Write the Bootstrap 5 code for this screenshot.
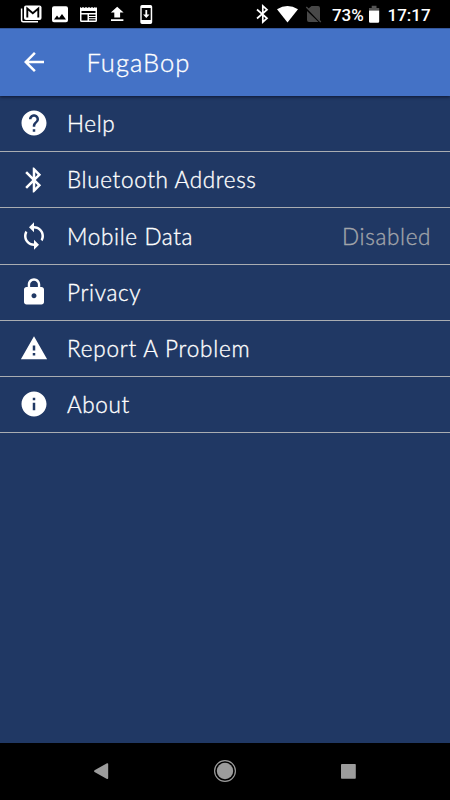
<!DOCTYPE html>
<html lang="en">
<head>
<meta charset="utf-8">
<meta name="viewport" content="width=device-width, initial-scale=1">
<title>FugaBop</title>
<link href="https://cdn.jsdelivr.net/npm/bootstrap@5.3.0/dist/css/bootstrap.min.css" rel="stylesheet">
<style>
body{background:#203864;font-family:Lato,"Noto Sans",sans-serif;height:800px;overflow:hidden;color:#fff}
svg{display:block;fill:currentColor;flex:none}
.status-bar{height:28px;background:#000;font:500 17px/28px Roboto,sans-serif;padding:0 19.500px 0 15px}
.charge{margin:2px 4px 0 7px;letter-spacing:-.1px}
.clock{margin:2px 0 0 8px;letter-spacing:-.05px}
.app-bar{height:68px;background:#4472c6;border-top:1px solid #35589c;box-shadow:0 1px 3px rgba(0,0,20,.6);padding:0 0 2px 18.500px}
.app-title{font-size:25.500px;line-height:30px;font-weight:300;margin:1px 0 0 38px;letter-spacing:1px;-webkit-text-stroke:.35px currentColor}
.settings .list-group-item{height:56px;background:transparent;color:#fff;border:0;border-bottom:1px solid #a9adb2;padding:0 18.500px;font-size:22.500px;font-weight:300;line-height:28px;letter-spacing:.65px}
.settings .list-group-item.tall{height:57px}
.settings .list-group-item.wide{letter-spacing:.8px}
.settings svg{margin:-1px 18.500px 0 0}
.settings svg.low{margin-top:0}
.settings span{padding-top:1px;-webkit-text-stroke:.35px currentColor}
.value{color:#a2a5aa;margin-right:.4px}
.nav-keys{height:57px;background:#000;color:#9c9c9c}
</style>
<script src="https://cdn.jsdelivr.net/npm/bootstrap@5.3.0/dist/js/bootstrap.bundle.min.js"></script>
</head>
<body class="d-flex flex-column m-0">
<div class="status-bar d-flex align-items-center">
<svg width="145" height="28" viewBox="15 0 145 28">
<path d="M21.600 8.500v11.800a1.500 1.500 0 0 0 1.500 1.500H38" fill="none" stroke="#fff" stroke-width="1.500"/>
<rect x="24" y="5.500" width="17.500" height="14.500" rx="2"/><path d="M27.300 17.500V8.500l5.500 4.800 5.500-4.800v9" fill="none" stroke="#000" stroke-width="1.900"/>
<path fill-rule="evenodd" d="M54 6.300h12a2 2 0 0 1 2 2v12a2 2 0 0 1-2 2H54a2 2 0 0 1-2-2v-12a2 2 0 0 1 2-2zM54 19.500h12l-4-5.500-3 4-2-2.600z"/>
<path fill-rule="evenodd" d="M80 7l1.500 1 1.500-1 1.500 1L86 7l1.500 1L89 7l1.500 1L92 7l1.500 1L95 7l1 1 1-1v13.500a1.500 1.500 0 0 1-1.500 1.500h-14A1.500 1.500 0 0 1 80 20.500zM81.500 11v2h14v-2zM81.500 14.500v6h6v-6zM89 14.500V16h6.500v-1.500zM89 17v1.200h6.500V17zM89 19.200v1.300h6.500v-1.300z"/>
<path d="M114.300 17.500v-5h-3.500l6.400-5.800 6.400 5.800h-3.500v5zM111 19.300h12.400V21H111z"/>
<path fill-rule="evenodd" d="M142 5h8.500a1.700 1.700 0 0 1 1.700 1.700v15.600a1.700 1.700 0 0 1-1.700 1.700H142a1.700 1.700 0 0 1-1.700-1.700V6.700A1.700 1.700 0 0 1 142 5zM141.700 8v12h9V8zM145.400 10h1.800v4.500h2.300l-3.200 3.500-3.200-3.500h2.300z"/>
</svg>
<svg width="70" height="28" viewBox="255 0 70 28" class="ms-auto">
<path d="M257 9.500l10 8.800-4.200 3.700V6l4.200 3.700-10 8.800" fill="none" stroke="#fff" stroke-width="1.700"/>
<path d="M277 9.300q10.500-6.600 21 0L287.500 22.600z"/>
<path d="M311.500 6H318a2 2 0 0 1 2 2v12L308.500 8.500zM307 11v9a2 2 0 0 0 2 2h9.500zM305.800 7.500l1-1 14.500 15-1 1z" fill="#484848"/>
</svg>
<span class="charge">73%</span>
<svg width="12" height="28" viewBox="367.500 0 12 28"><path d="M368.500 10.500V8h2.700V5.800h4.800V8h2.700v2.500z" fill="#555"/><path d="M368.500 10.500h10.200V21.500a1.300 1.300 0 0 1-1.300 1.300h-7.600a1.300 1.300 0 0 1-1.300-1.300z"/></svg>
<span class="clock">17:17</span>
</div>
<header class="app-bar d-flex align-items-center">
<svg width="30" height="30" viewBox="0 0 24 24"><path d="M20 11H7.830l5.590-5.590L12 4l-8 8 8 8 1.410-1.410L7.830 13H20v-2z"/></svg>
<h1 class="app-title">FugaBop</h1>
</header>
<main class="flex-grow-1">
<div class="settings list-group rounded-0">
<div class="list-group-item d-flex align-items-center"><svg width="30" height="30" viewBox="0 0 24 24"><path d="M12 2C6.480 2 2 6.480 2 12s4.480 10 10 10 10-4.480 10-10S17.520 2 12 2zm1 17h-2v-2h2v2zm2.070-7.750l-.9.920C13.450 12.900 13 13.500 13 15h-2v-.5c0-1.100.45-2.100 1.170-2.830l1.240-1.260c.37-.36.590-.86.590-1.410 0-1.100-.9-2-2-2s-2 .9-2 2H8c0-2.210 1.790-4 4-4s4 1.790 4 4c0 .88-.36 1.680-.93 2.250z"/></svg><span>Help</span></div>
<div class="list-group-item d-flex align-items-center"><svg class="low" width="30" height="30" viewBox="0 0 24 24"><path d="M17.710 7.710L12 2h-1v7.590L6.410 5 5 6.410 10.590 12 5 17.590 6.410 19 11 14.410V22h1l5.710-5.710-4.300-4.290 4.300-4.290zM13 5.830l1.880 1.880L13 9.590V5.830zm1.880 10.460L13 18.170v-3.760l1.880 1.880z"/></svg><span>Bluetooth Address</span></div>
<div class="list-group-item tall d-flex align-items-center"><svg width="30" height="30" viewBox="0 0 24 24"><path d="M12 4V1L8 5l4 4V6c3.310 0 6 2.690 6 6 0 1.010-.25 1.970-.7 2.800l1.460 1.460C19.540 15.030 20 13.570 20 12c0-4.420-3.580-8-8-8zm0 14c-3.310 0-6-2.690-6-6 0-1.010.25-1.970.7-2.800L5.240 7.740C4.460 8.970 4 10.430 4 12c0 4.420 3.580 8 8 8v3l4-4-4-4v3z"/></svg><span>Mobile Data</span><span class="value ms-auto">Disabled</span></div>
<div class="list-group-item d-flex align-items-center"><svg width="30" height="30" viewBox="0 0 24 24"><path d="M18 8h-1V6c0-2.760-2.240-5-5-5S7 3.240 7 6v2H6c-1.100 0-2 .9-2 2v10c0 1.100.9 2 2 2h12c1.100 0 2-.9 2-2V10c0-1.100-.9-2-2-2zm-6 9c-1.100 0-2-.9-2-2s.9-2 2-2 2 .9 2 2-.9 2-2 2zm3.100-9H8.900V6c0-1.710 1.390-3.100 3.100-3.100s3.100 1.390 3.100 3.100v2z"/></svg><span>Privacy</span></div>
<div class="list-group-item wide d-flex align-items-center"><svg width="30" height="30" viewBox="0 0 24 24"><path d="M1.500 21h21L12 2.500zM13 18h-2v-2h2v2zm0-4h-2v-4h2v4z"/></svg><span>Report A Problem</span></div>
<div class="list-group-item d-flex align-items-center"><svg width="30" height="30" viewBox="0 0 24 24"><path d="M12 2C6.480 2 2 6.480 2 12s4.480 10 10 10 10-4.480 10-10S17.520 2 12 2zm1 15h-2v-6h2v6zm0-8h-2V7h2v2z"/></svg><span>About</span></div>
</div>
</main>
<footer class="nav-keys"><svg width="450" height="57" viewBox="0 743 450 57"><path d="M94.500 770.300L107 763.300q1.200-.4 1.200 .8v14q0 1.200-1.200.8L94.500 772q-1-.8 0-1.700z"/><circle cx="225" cy="771" r="8.200"/><circle cx="225" cy="771" r="10.400" fill="none" stroke="currentColor" stroke-width="1.200"/><rect x="341" y="764" width="14.800" height="14.800" rx=".8"/></svg></footer>
</body>
</html>
